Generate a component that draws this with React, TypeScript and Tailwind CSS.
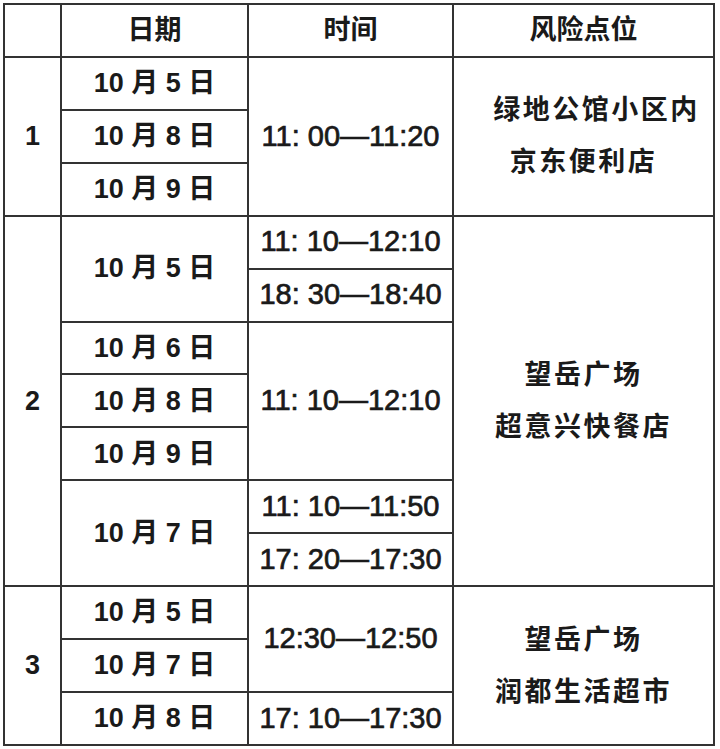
type Cell = { text: string[]; cls: string; kind: 'head' | 'no' | 'date' | 'time' | 'place' };

// explicit grid placement: row 1 = header, rows 2-14 = data
const cells: Cell[] = [
  { text: [''], cls: 'col-start-1 row-start-1', kind: 'head' },
  { text: ['日期'], cls: 'col-start-2 row-start-1', kind: 'head' },
  { text: ['时间'], cls: 'col-start-3 row-start-1', kind: 'head' },
  { text: ['风险点位'], cls: 'col-start-4 row-start-1', kind: 'head' },

  // group 1
  { text: ['1'], cls: 'col-start-1 row-start-2 row-span-3', kind: 'no' },
  { text: ['10 月 5 日'], cls: 'col-start-2 row-start-2', kind: 'date' },
  { text: ['10 月 8 日'], cls: 'col-start-2 row-start-3', kind: 'date' },
  { text: ['10 月 9 日'], cls: 'col-start-2 row-start-4', kind: 'date' },
  { text: ['11: 00—11:20'], cls: 'col-start-3 row-start-2 row-span-3', kind: 'time' },
  { text: ['绿地公馆小区内', '京东便利店'], cls: 'col-start-4 row-start-2 row-span-3', kind: 'place' },

  // group 2
  { text: ['2'], cls: 'col-start-1 row-start-5 row-span-7', kind: 'no' },
  { text: ['10 月 5 日'], cls: 'col-start-2 row-start-5 row-span-2', kind: 'date' },
  { text: ['10 月 6 日'], cls: 'col-start-2 row-start-7', kind: 'date' },
  { text: ['10 月 8 日'], cls: 'col-start-2 row-start-8', kind: 'date' },
  { text: ['10 月 9 日'], cls: 'col-start-2 row-start-9', kind: 'date' },
  { text: ['10 月 7 日'], cls: 'col-start-2 row-start-10 row-span-2', kind: 'date' },
  { text: ['11: 10—12:10'], cls: 'col-start-3 row-start-5', kind: 'time' },
  { text: ['18: 30—18:40'], cls: 'col-start-3 row-start-6', kind: 'time' },
  { text: ['11: 10—12:10'], cls: 'col-start-3 row-start-7 row-span-3', kind: 'time' },
  { text: ['11: 10—11:50'], cls: 'col-start-3 row-start-10', kind: 'time' },
  { text: ['17: 20—17:30'], cls: 'col-start-3 row-start-11', kind: 'time' },
  { text: ['望岳广场', '超意兴快餐店'], cls: 'col-start-4 row-start-5 row-span-7', kind: 'place' },

  // group 3
  { text: ['3'], cls: 'col-start-1 row-start-12 row-span-3', kind: 'no' },
  { text: ['10 月 5 日'], cls: 'col-start-2 row-start-12', kind: 'date' },
  { text: ['10 月 7 日'], cls: 'col-start-2 row-start-13', kind: 'date' },
  { text: ['10 月 8 日'], cls: 'col-start-2 row-start-14', kind: 'date' },
  { text: ['12:30—12:50'], cls: 'col-start-3 row-start-12 row-span-2', kind: 'time' },
  { text: ['17: 10—17:30'], cls: 'col-start-3 row-start-14', kind: 'time' },
  { text: ['望岳广场', '润都生活超市'], cls: 'col-start-4 row-start-12 row-span-3', kind: 'place' },
];

const kindCls: Record<Cell['kind'], string> = {
  head: 'text-[27px] font-bold',
  no: 'text-[27px] font-bold',
  date: 'text-[27px] font-bold',
  time: 'text-[29px] font-normal [-webkit-text-stroke:0.7px_#1a1a1a]',
  place: 'text-[27px] font-semibold tracking-[2.5px] leading-[52px]',
};

export default function App() {
  return (
    <div className="w-[720px] h-[749px] bg-white pt-[3px] pl-[3px]">
      <div
        className="grid grid-cols-[55px_185px_203px_259px] grid-rows-[repeat(14,minmax(0,1fr))] gap-[2px] p-[2px] bg-[#333] w-[712px] h-[743px] text-[#1a1a1a]"
        style={{ fontFamily: '"Liberation Sans", "Noto Sans CJK SC", sans-serif' }}
      >
        {cells.map((c, i) => (
          <div key={i} className={`${c.cls} ${kindCls[c.kind]} bg-white flex flex-col items-center justify-center whitespace-nowrap`}>
            {c.text.map((t, j) => (
              <span key={j} className={c.kind === 'place' && j === 0 && t.length === 7 ? 'pl-[26px]' : ''}>
                {t}
              </span>
            ))}
          </div>
        ))}
      </div>
    </div>
  );
}
